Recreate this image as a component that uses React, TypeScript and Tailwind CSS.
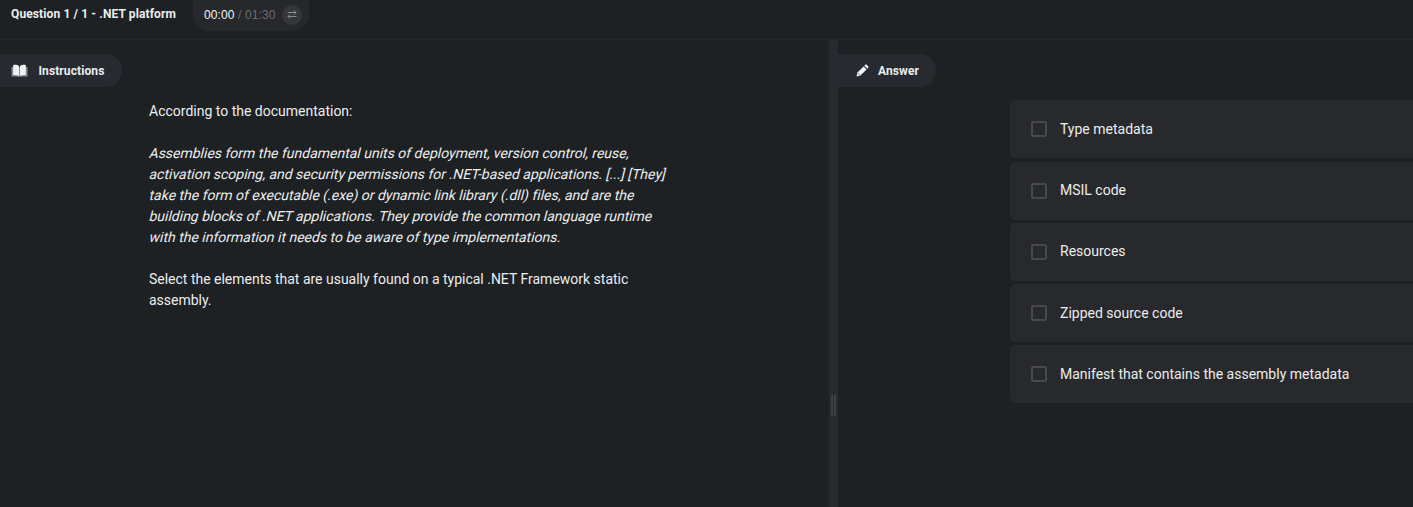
import React from "react";

const options: string[] = [
  "Type metadata",
  "MSIL code",
  "Resources",
  "Zipped source code",
  "Manifest that contains the assembly metadata",
];

const quote: string[] = [
  "Assemblies form the fundamental units of deployment, version control, reuse,",
  "activation scoping, and security permissions for .NET-based applications. [...] [They]",
  "take the form of executable (.exe) or dynamic link library (.dll) files, and are the",
  "building blocks of .NET applications. They provide the common language runtime",
  "with the information it needs to be aware of type implementations.",
];

function BookIcon() {
  return (
    <svg className="h-[13px] w-[17px] shrink-0" viewBox="0 0 17 13">
      <path d="M0.500 3v9.500h5.700c1 0 1.500 0 2.300.5.800-.5 1.300-.5 2.300-.5h5.700V3" fill="#85888e" />
      <path d="M2.200 1C4.200.6 6.400.8 8 2v10C6.300 11 4.300 10.700 2.200 11z" fill="#f1f2f4" />
      <path d="M14.800 1C12.800.6 10.600.8 9 2v10c1.700-1 3.700-1.300 5.800-1z" fill="#f1f2f4" />
    </svg>
  );
}

function PencilIcon() {
  return (
    <svg className="h-[13px] w-[13px] shrink-0" viewBox="0 0 13 13" fill="#f1f2f4">
      <path d="M0.500 12.500l.9-3.900 6.200-6.200 3 3-6.200 6.200z" />
      <path d="M8.300 1.700l.9-.9c.5-.5 1-.5 1.500 0l1.500 1.500c.5.5.5 1 0 1.500l-.9.9z" />
      <path d="M1.900 9.200l1.900 1.900" stroke="#272a31" strokeWidth=".6" />
    </svg>
  );
}

function SwapIcon() {
  return (
    <svg className="h-[9px] w-[10px]" viewBox="0 0 10 9" fill="none" stroke="#8b8d91" strokeWidth="1">
      <path d="M0.500 2.500H9M7 .5l2 2-2 2M9.500 6.500H1M3 4.500l-2 2 2 2" />
    </svg>
  );
}

export default function App() {
  return (
    <div className="flex h-[507px] w-full flex-col overflow-hidden bg-[#1d2124] font-['Roboto',sans-serif] text-[#eceded]">
      <header className="flex h-10 shrink-0 items-start border-b border-[#24282b] pl-[11px]">
        <h1 className="mt-[5px] w-[182px] text-[12px] leading-[18px] font-bold whitespace-nowrap">
          <span className="tracking-[0.12px]">Question 1 / 1 - .NET platform</span>
        </h1>
        <div className="flex h-[31px] w-[116px] items-center rounded-b-[16px] bg-[#26282c] pl-[11px] font-['Liberation_Sans',sans-serif] text-[12px] leading-[28px] whitespace-pre">
          <span className="-mt-[2px] tracking-[0.12px] text-[#f4f4f5]">00:00</span>
          <span className="-mt-[2px] tracking-[0.12px] text-[#696c70]"> / 01:30</span>
          <span className="-mt-[2px] ml-[6px] flex size-5 items-center justify-center rounded-full bg-[#34363a]">
            <SwapIcon />
          </span>
        </div>
      </header>

      <main className="flex min-h-0 flex-1">
        <section className="w-[829px] shrink-0 pt-[14px]">
          <div className="flex h-[33px] w-[122px] items-center rounded-r-full bg-[#272a31] pl-[11px]">
            <BookIcon />
            <h2 className="ml-[10.500px] text-[12px] leading-[18px] font-bold tracking-[0.1px]">Instructions</h2>
          </div>
          <div className="mt-[14px] ml-[149px] text-[14px] leading-[21px] whitespace-nowrap">
            <p>According to the documentation:</p>
            <p className="mt-[21px] flex flex-col items-start">
              {quote.map((line) => (
                <em key={line} className="origin-[0_13px] -skew-x-[14deg] tracking-[-0.007px] not-italic">
                  {line}
                </em>
              ))}
            </p>
            <p className="mt-[21px] tracking-[-0.007px]">
              Select the elements that are usually found on a typical .NET Framework static
              <br />
              assembly.
            </p>
          </div>
        </section>

        <div className="flex w-[9px] shrink-0 justify-center gap-px bg-[#262a31] pt-[355px]">
          <span className="h-[21px] w-[2px] bg-[#3d4047]" />
          <span className="h-[21px] w-[2px] bg-[#3d4047]" />
        </div>

        <section className="min-w-0 flex-1 pt-[14px]">
          <div className="flex h-[33px] w-[98px] items-center rounded-r-full bg-[#272a31] pl-[18px]">
            <PencilIcon />
            <h2 className="ml-[9px] text-[12px] leading-[18px] font-bold tracking-[0.1px]">Answer</h2>
          </div>
          <ul className="mt-[13.3px] ml-[172px] flex flex-col gap-[3.25px]">
            {options.map((option) => (
              <li key={option} className="flex h-[58px] items-center rounded-l-[5px] bg-[#28292c] pl-[21px] text-[14px] leading-[21px]">
                <span className="size-4 shrink-0 rounded-[2px] border-2 border-[#48494c]" />
                <span className="ml-[13px] whitespace-nowrap">{option}</span>
              </li>
            ))}
          </ul>
        </section>
      </main>
    </div>
  );
}
